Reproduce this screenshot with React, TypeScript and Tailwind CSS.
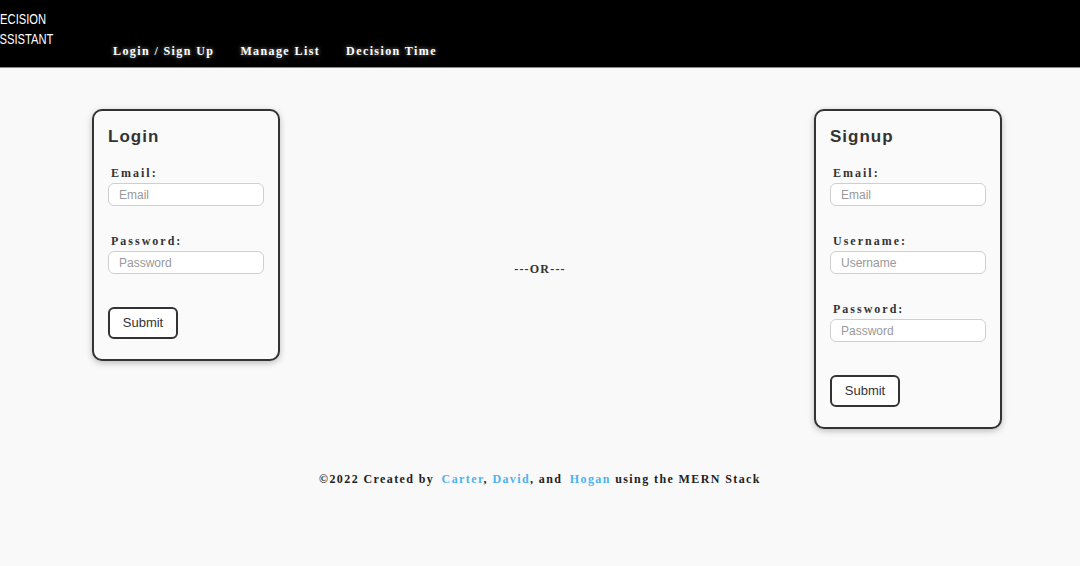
import React from "react";

const serif = { fontFamily: '"Liberation Serif", "Times New Roman", serif' };

function Field({ label, placeholder }: { label: string; placeholder: string }) {
  return (
    <div className="flex flex-col">
      <label
        className="ml-[3px] text-[12px] leading-[14px] font-bold tracking-[2px] text-[#333]"
        style={serif}
      >
        {label}
      </label>
      <input
        placeholder={placeholder}
        className="mt-[3px] h-[23px] w-full rounded-[6px] border border-[#cfcfcf] bg-white px-[10px] text-[12px] text-[#333] placeholder:text-[#999] outline-none"
        style={{ fontFamily: '"Liberation Sans", Arial, sans-serif' }}
      />
    </div>
  );
}

function Card({ title, fields }: { title: string; fields: [string, string][] }) {
  return (
    <div
      className="w-[188px] rounded-[10px] border-2 border-[#333] bg-[#fafafa] px-[14px] pt-[16px] pb-[20px] shadow-[0_2px_6px_rgba(0,0,0,0.25)]"
      style={{ fontFamily: '"Liberation Sans", Arial, sans-serif' }}
    >
      <h2 className="text-[17px] leading-[20px] font-bold tracking-[1px] text-[#333]">{title}</h2>
      <div className="mt-[19px] flex flex-col gap-[28px]">
        {fields.map(([l, p]) => (
          <Field key={l} label={l} placeholder={p} />
        ))}
      </div>
      <button className="mt-[33px] h-[32px] w-[70px] rounded-[6px] border-2 border-[#333] bg-white text-[13px] text-[#333]">
        Submit
      </button>
    </div>
  );
}

export default function App() {
  return (
    <div className="min-h-[566px] w-full bg-[#f9f9f9]">
      <header className="flex h-[68px] items-start border-b border-[#8a8a8a] bg-black">
        <div
          className="ml-[-8px] mt-[9px] w-[60px] origin-left scale-x-[0.8] text-[14px] leading-[20px] text-white"
          style={{ fontFamily: '"Liberation Sans", Arial, sans-serif' }}
        >
          <div>DECISION</div>
          <div>ASSISTANT</div>
        </div>
        <nav
          className="ml-[61px] mt-[43px] flex gap-[26px] text-[12px] leading-[16px] font-bold tracking-[1.4px] text-white"
          style={{ ...serif, textShadow: "0 0 4px rgba(200,200,200,0.7)" }}
        >
          <a>Login / Sign Up</a>
          <a>Manage List</a>
          <a>Decision Time</a>
        </nav>
      </header>

      <main className="mt-[41px] grid grid-cols-3 items-start">
        <div className="ml-[92px]">
          <Card title="Login" fields={[["Email:", "Email"], ["Password:", "Password"]]} />
        </div>
        <div className="flex h-[320px] items-center justify-center">
          <span className="text-[12px] font-bold tracking-[1.2px] text-[#333]" style={serif}>
            ---OR---
          </span>
        </div>
        <div className="ml-[94px]">
          <Card
            title="Signup"
            fields={[["Email:", "Email"], ["Username:", "Username"], ["Password:", "Password"]]}
          />
        </div>
      </main>

      <footer
        className="mt-[42px] text-center text-[12px] leading-[16px] font-bold tracking-[1.4px] text-[#222]"
        style={serif}
      >
        ©2022 Created by <a className="ml-[3px] text-[#4db3f0]">Carter</a>,{" "}
        <a className="text-[#4db3f0]">David</a>, and <a className="ml-[3px] text-[#4db3f0]">Hogan</a> using the MERN
        Stack
      </footer>
    </div>
  );
}
